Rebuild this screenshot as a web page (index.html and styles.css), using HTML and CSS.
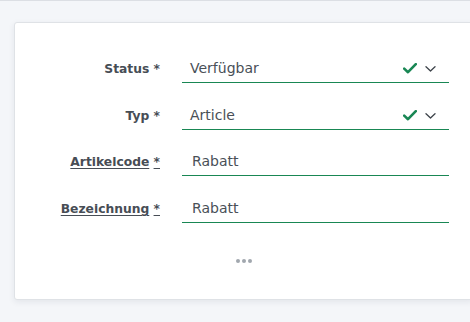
FILE: index.html
```html
<!DOCTYPE html>
<html lang="de">
<head>
	<meta charset="UTF-8">
	<meta name="viewport" content="width=device-width, initial-scale=1.0">
	<title>Artikel</title>
	<link rel="stylesheet" href="styles.css">
</head>
<body>
	<div class="page">
		<div class="card">
			<form class="form-grid">
				<label class="form-label">Status *</label>
				<div class="form-control select">
					<span class="value">Verfügbar</span>
					<span class="icons">
						<svg class="check" width="14" height="11" viewBox="0 0 14 11"><path d="M1.2 5.6 L5 9.2 L12.8 1.2" fill="none" stroke="#198754" stroke-width="2.6" stroke-linecap="round" stroke-linejoin="round"/></svg>
						<svg class="chevron" width="11" height="6" viewBox="0 0 11 6"><path d="M1 0.8 L5.5 5 L10 0.8" fill="none" stroke="#3d434a" stroke-width="1.3" stroke-linecap="round" stroke-linejoin="round"/></svg>
					</span>
				</div>

				<label class="form-label">Typ *</label>
				<div class="form-control select">
					<span class="value">Article</span>
					<span class="icons">
						<svg class="check" width="14" height="11" viewBox="0 0 14 11"><path d="M1.2 5.6 L5 9.2 L12.8 1.2" fill="none" stroke="#198754" stroke-width="2.6" stroke-linecap="round" stroke-linejoin="round"/></svg>
						<svg class="chevron" width="11" height="6" viewBox="0 0 11 6"><path d="M1 0.8 L5.5 5 L10 0.8" fill="none" stroke="#3d434a" stroke-width="1.3" stroke-linecap="round" stroke-linejoin="round"/></svg>
					</span>
				</div>

				<label class="form-label"><a href="#">Artikelcode</a> <a href="#">*</a></label>
				<div class="form-control text">
					<span class="value">Rabatt</span>
				</div>

				<label class="form-label"><a href="#">Bezeichnung</a> <a href="#">*</a></label>
				<div class="form-control text">
					<span class="value">Rabatt</span>
				</div>
			</form>
			<div class="more">
				<span class="dot"></span><span class="dot"></span><span class="dot"></span>
			</div>
		</div>
	</div>
</body>
</html>
```

FILE: styles.css
```css
html,
body {
	margin: 0;
	padding: 0;
	overflow: hidden;
}

body {
	font-family: 'DejaVu Sans', Verdana, sans-serif;
	background: #f4f6f9;
	color: #495057;
	border-top: 1px solid #dcdfe4;
	height: 321px;
}

.page {
	padding: 21px 0 0 14px;
	width: 459px;
}

.card {
	background: #fff;
	border: 1px solid #dfe2e6;
	border-radius: 3px;
	box-shadow: 0 2px 6px rgba(30, 40, 60, 0.08);
	padding: 25px 0 36px;
	width: 459px;
	box-sizing: border-box;
}

.form-grid {
	display: grid;
	grid-template-columns: 145px 267px;
	column-gap: 22px;
	row-gap: 11.7px;
	align-items: baseline;
}

.form-label {
	text-align: right;
	font-weight: bold;
	font-size: 12.3px;
	color: #474d55;
}

.form-label a {
	color: #474d55;
	text-decoration: underline;
	text-underline-offset: 2px;
}

.form-control {
	display: flex;
	align-items: flex-end;
	height: 35px;
	box-sizing: border-box;
	border-bottom: 1px solid #198754;
	font-size: 14px;
	padding: 0 0 6px 8px;
}

.form-control.text {
	padding-left: 10px;
}

.value {
	flex: 1;
}

.icons {
	display: flex;
	align-items: center;
	gap: 8px;
	margin: 0 13px 2px 0;
}

.chevron {
	margin-top: 1px;
}

.more {
	display: flex;
	justify-content: center;
	gap: 2px;
	margin-top: 36px;
}

.dot {
	width: 4px;
	height: 4px;
	border-radius: 50%;
	background: #a1a7ae;
}
```
